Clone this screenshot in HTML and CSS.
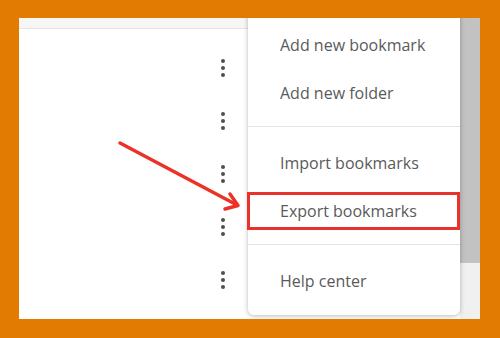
FILE: index.html
```html
<!DOCTYPE html>
<html>
<head>
<meta charset="utf-8">
<link rel="stylesheet" href="styles.css">
</head>
<body>
<div class="frame">
  <div class="panel">
    <div class="content">
      <div class="header"></div>
      <div class="list">
        <div class="row"><span class="kebab"><i></i><i></i><i></i></span></div>
        <div class="row"><span class="kebab"><i></i><i></i><i></i></span></div>
        <div class="row"><span class="kebab"><i></i><i></i><i></i></span></div>
        <div class="row"><span class="kebab"><i></i><i></i><i></i></span></div>
        <div class="row"><span class="kebab"><i></i><i></i><i></i></span></div>
      </div>
    </div>
    <div class="scrollbar"><div class="thumb"></div></div>
    <div class="menu">
      <div class="section first">
        <div class="item">Add new bookmark</div>
        <div class="item">Add new folder</div>
      </div>
      <div class="section">
        <div class="item">Import bookmarks</div>
        <div class="item highlight">Export bookmarks<span class="box"></span></div>
      </div>
      <div class="section last">
        <div class="item">Help center</div>
      </div>
    </div>
    <svg class="arrow" width="461" height="301" viewBox="19 18 461 301">
      <line x1="120" y1="143" x2="237" y2="205" />
      <polyline points="230,194 238,205.5 225,209" />
    </svg>
  </div>
</div>
</body>
</html>
```
FILE: styles.css
```css
html, body {
  margin: 0;
  padding: 0;
}
body {
  background: #e17b01;
  width: 500px;
  height: 338px;
  overflow: hidden;
  font-family: "Segoe UI", "Open Sans", "Noto Sans", sans-serif;
}
.frame {
  padding: 18px 20px 19px 19px;
}
.panel {
  position: relative;
  height: 301px;
  background: #fff;
  display: flex;
  overflow: hidden;
}
.content {
  flex: 1;
  display: flex;
  flex-direction: column;
}
.header {
  height: 10px;
  background: #f6f6f6;
  border-bottom: 1px solid #e6e6e6;
}
.list {
  padding-top: 12px;
  display: flex;
  flex-direction: column;
}
.row {
  height: 53px;
  display: flex;
  align-items: center;
  padding-left: 202px;
}
.kebab {
  display: flex;
  flex-direction: column;
  gap: 3px;
}
.kebab i {
  display: block;
  width: 4px;
  height: 4px;
  border-radius: 50%;
  background: #505050;
}
.scrollbar {
  width: 20px;
  background: #f0f0f0;
  display: flex;
  flex-direction: column;
}
.thumb {
  height: 245px;
  background: #c2c2c2;
}
.menu {
  position: absolute;
  left: 229px;
  top: -9px;
  width: 212px;
  background: #fff;
  border-radius: 0 0 6px 6px;
  box-shadow: 0 1px 5px rgba(0, 0, 0, 0.28);
}
.section {
  padding: 12px 0 9px;
  border-bottom: 1px solid #e4e4e4;
}
.section.last {
  border-bottom: none;
  padding-bottom: 10px;
}
.item {
  position: relative;
  height: 48px;
  line-height: 48px;
  padding-left: 32px;
  font-size: 16px;
  color: #5a5a5a;
}
.box {
  position: absolute;
  left: -1px;
  right: 0;
  top: 5px;
  bottom: 5px;
  border: 3px solid #e8322b;
}
.arrow {
  position: absolute;
  left: 0;
  top: 0;
  pointer-events: none;
}
.arrow line, .arrow polyline {
  fill: none;
  stroke: #ec3226;
  stroke-width: 3.5;
  stroke-linecap: round;
  stroke-linejoin: round;
}
```
